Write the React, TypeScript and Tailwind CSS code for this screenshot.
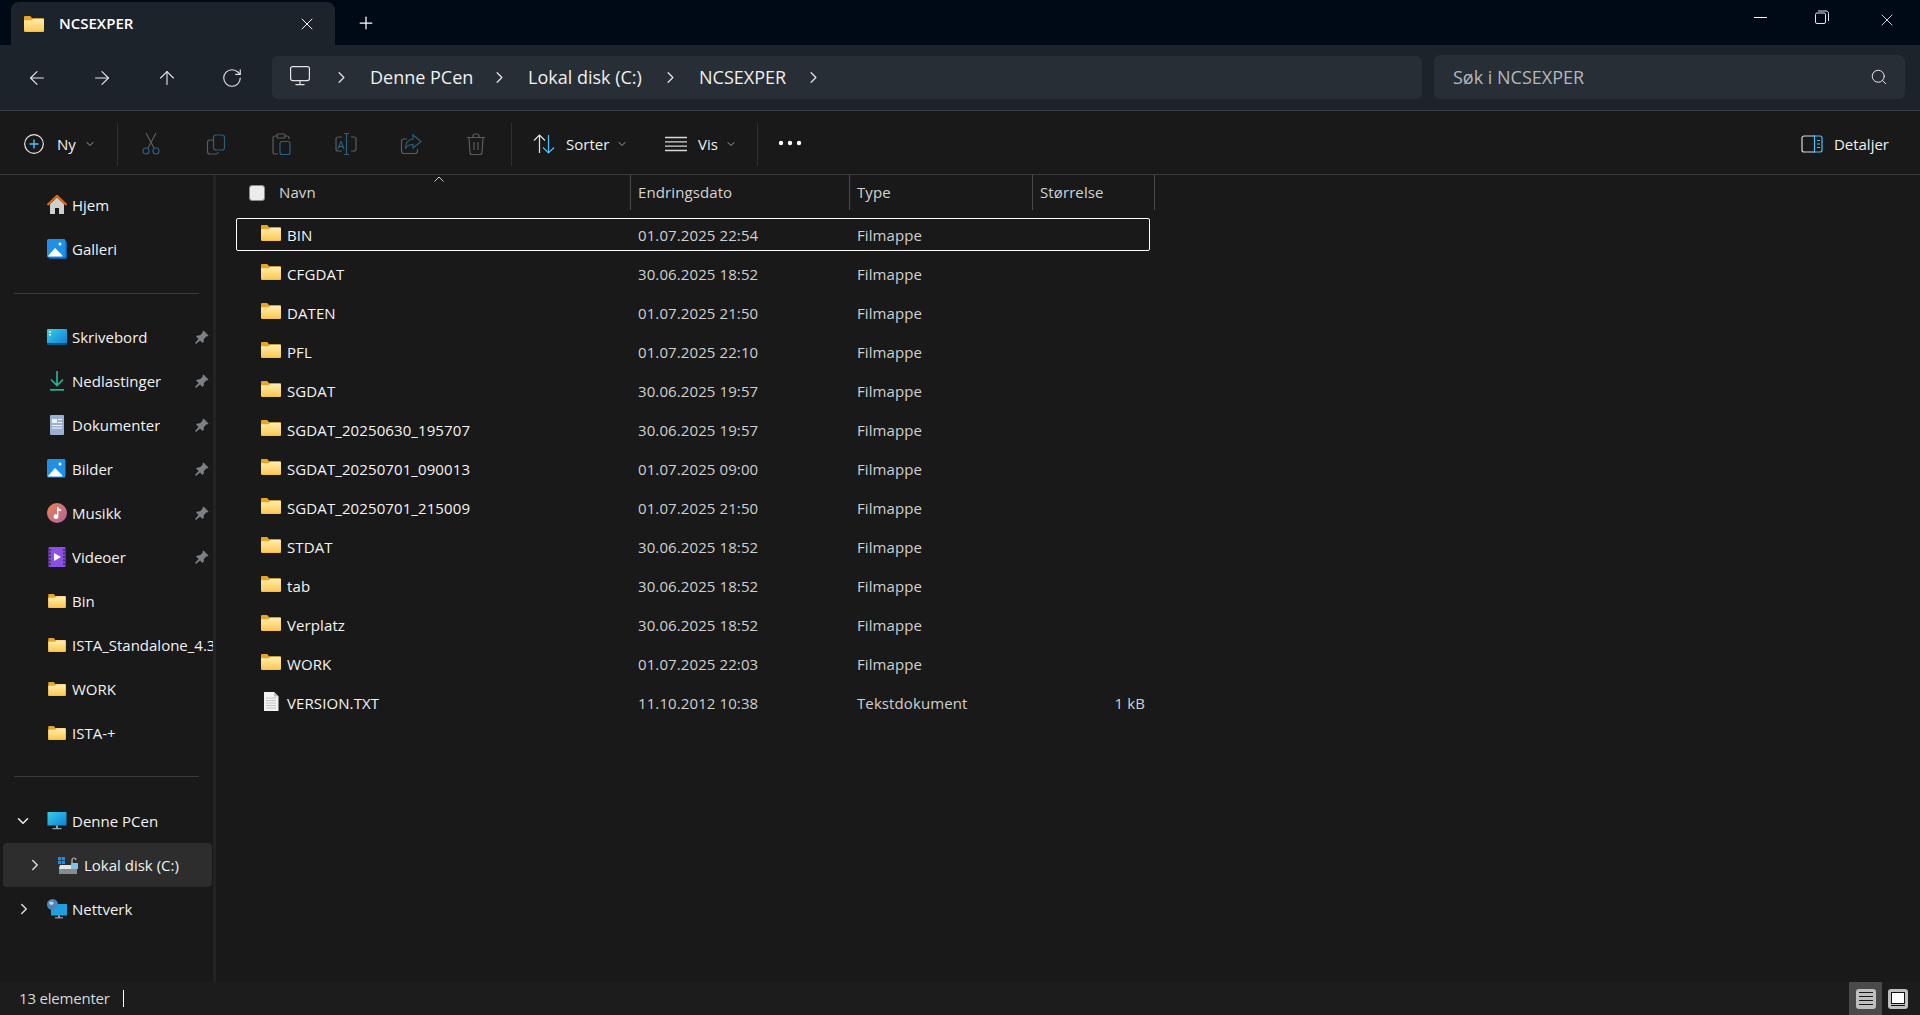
import { useId } from 'react'
import { ArrowLeft, ArrowRight, ArrowUp, ChevronDown, ChevronRight, Plus, RotateCw, Search, X } from 'lucide-react'

const files = [
  { name: 'BIN', date: '01.07.2025 22:54', type: 'Filmappe' },
  { name: 'CFGDAT', date: '30.06.2025 18:52', type: 'Filmappe' },
  { name: 'DATEN', date: '01.07.2025 21:50', type: 'Filmappe' },
  { name: 'PFL', date: '01.07.2025 22:10', type: 'Filmappe' },
  { name: 'SGDAT', date: '30.06.2025 19:57', type: 'Filmappe' },
  { name: 'SGDAT_20250630_195707', date: '30.06.2025 19:57', type: 'Filmappe' },
  { name: 'SGDAT_20250701_090013', date: '01.07.2025 09:00', type: 'Filmappe' },
  { name: 'SGDAT_20250701_215009', date: '01.07.2025 21:50', type: 'Filmappe' },
  { name: 'STDAT', date: '30.06.2025 18:52', type: 'Filmappe' },
  { name: 'tab', date: '30.06.2025 18:52', type: 'Filmappe' },
  { name: 'Verplatz', date: '30.06.2025 18:52', type: 'Filmappe' },
  { name: 'WORK', date: '01.07.2025 22:03', type: 'Filmappe' },
  { name: 'VERSION.TXT', date: '11.10.2012 10:38', type: 'Tekstdokument', size: '1 kB' },
]

function Folder({ className = 'w-5 h-4' }: { className?: string }) {
  const id = useId()
  return (
    <svg viewBox="0 0 20 16" className={className}>
      <defs>
        <linearGradient id={id} x1="0" y1="0" x2="0" y2="1">
          <stop offset="0" stopColor="#ffeeb0" />
          <stop offset="1" stopColor="#fcc74f" />
        </linearGradient>
      </defs>
      <path d="M0 1.2C0 .5.5 0 1.2 0h5l2 2.2H19c.6 0 1 .4 1 1v11.6c0 .7-.5 1.2-1.2 1.2H1.2C.5 16 0 15.500 0 14.800z" fill="#e8a521" />
      <path d="M0 4.200h7.500l2-1.500h9.300c.7 0 1.200.5 1.200 1.200v10.600c0 .8-.5 1.300-1.200 1.300H1.200C.5 15.800 0 15.300 0 14.600z" fill={`url(#${id})`} />
    </svg>
  )
}

function TextFile() {
  return (
    <svg viewBox="0 0 16 19" className="w-4 h-[19px]">
      <path d="M1 0h10l4.500 4.500V19H1z" fill="#f2f2f2" />
      <path d="M11 0l4.500 4.500H11z" fill="#bdbdbd" />
      <path d="M3 6h10M3 8.500h10M3 11h10M3 13.500h10M3 16h10" stroke="#c4c4c4" strokeWidth="1" />
    </svg>
  )
}

function Pin() {
  return (
    <svg viewBox="0 0 14 14" className="w-[14px] h-[14px]">
      <path d="M8.500.5l5 5-1 1-1-.2-2.600 2.600-.2 2.800-1.200 1.200-2.500-2.500L1 14 0 13l3.600-3.900L1.100 6.600l1.200-1.200 2.800-.2 2.600-2.600-.2-1z" fill="#7b8086" />
    </svg>
  )
}

function HomeIcon() {
  return (
    <svg viewBox="0 0 20 20" className="w-5 h-5">
      <path d="M3 9l7-6.500L17 9v10H12v-6H8v6H3z" fill="#cfcfcf" />
      <path d="M.5 10L10 .8 19.500 10" fill="none" stroke="#ee6a0c" strokeWidth="2" />
    </svg>
  )
}

function PictureIcon({ back = false }: { back?: boolean }) {
  return (
    <svg viewBox="0 0 20 20" className="w-5 h-5">
      {back && <rect x="2" y="2" width="18" height="18" rx="1.500" fill="#0f5fb0" />}
      <rect x="0" y="0" width="18.500" height="18.500" rx="1.500" fill="#1e90e6" />
      <circle cx="13" cy="5" r="1.500" fill="#fff" />
      <path d="M1 17l7-8 7 7 .5 1.500H1z" fill="#fff" />
    </svg>
  )
}

function DesktopIcon() {
  return (
    <svg viewBox="0 0 20 17" className="w-5 h-[17px]">
      <defs>
        <linearGradient id="desk" x1="0" y1="0" x2="1" y2="1">
          <stop offset="0" stopColor="#35cfe6" />
          <stop offset="1" stopColor="#0f7fd6" />
        </linearGradient>
      </defs>
      <rect width="20" height="15.500" rx="1" fill="url(#desk)" />
      <rect y="14" width="20" height="1.500" fill="#0b4f8f" />
      <rect x="2" y="2" width="2" height="1.500" fill="#fff" />
      <rect x="2" y="5" width="2" height="1.500" fill="#fff" />
    </svg>
  )
}

function DownloadIcon() {
  return (
    <svg viewBox="0 0 20 20" className="w-5 h-5">
      <path d="M10 0v14M4 8.500l6 6 6-6" fill="none" stroke="#22b594" strokeWidth="1.700" />
      <rect x="3" y="18" width="14" height="1.700" fill="#22b594" />
    </svg>
  )
}

function DocIcon() {
  return (
    <svg viewBox="0 0 20 20" className="w-5 h-5">
      <rect x="3" y="0" width="14" height="20" rx="1" fill="#9ab2d0" />
      <rect x="5" y="4" width="5" height="4" fill="#eef3fa" />
      <path d="M11 4.500h4M11 7.500h4M5 10.500h10M5 13h10" stroke="#eef3fa" strokeWidth="1.200" />
    </svg>
  )
}

function MusicIcon() {
  return (
    <svg viewBox="0 0 20 20" className="w-5 h-5">
      <defs>
        <linearGradient id="mus" x1="0" y1="0" x2="1" y2="1">
          <stop offset="0" stopColor="#ec8250" />
          <stop offset="1" stopColor="#b0629e" />
        </linearGradient>
      </defs>
      <circle cx="10" cy="10" r="10" fill="url(#mus)" />
      <path d="M10 4h1.400c.2 1.500 1.500 2.200 2.800 2.400v1.800c-1 0-2-.4-2.800-1v6.300a2.400 2.400 0 1 1-1.400-2.100z" fill="#fff" />
    </svg>
  )
}

function VideoIcon() {
  return (
    <svg viewBox="0 0 20 20" className="w-5 h-5">
      <rect x="1.500" y="0" width="17" height="20" rx="1" fill="#8b4fe4" />
      <path d="M3 2v16M17 2v16" stroke="#3f2173" strokeWidth="1.500" strokeDasharray="2 1.500" />
      <path d="M7 6l7 4-7 4z" fill="#fff" />
    </svg>
  )
}

function PcIcon() {
  return (
    <svg viewBox="0 0 20 20" className="w-5 h-5">
      <defs>
        <linearGradient id="pc" x1="0" y1="0" x2="1" y2="1">
          <stop offset="0" stopColor="#35cfe6" />
          <stop offset="1" stopColor="#0f7fd6" />
        </linearGradient>
      </defs>
      <rect x="0.500" y="1" width="19" height="13.500" fill="url(#pc)" />
      <rect x="9" y="14.500" width="2" height="3" fill="#9aa4ad" />
      <rect x="5.500" y="17" width="9" height="1.200" fill="#9aa4ad" />
    </svg>
  )
}

function DriveIcon() {
  return (
    <svg viewBox="0 0 20 17" className="w-5 h-[17px]">
      <rect x="0" y="0" width="3.200" height="3.200" fill="#1d8fe6" />
      <rect x="3.800" y="0" width="3.200" height="3.200" fill="#1d8fe6" />
      <rect x="0" y="3.800" width="3.200" height="3.200" fill="#1d8fe6" />
      <rect x="3.800" y="3.800" width="3.200" height="3.200" fill="#1d8fe6" />
      <path d="M2 8h16l1 3v5.500H1V11z" fill="#e4e4e4" />
      <rect x="1" y="12" width="18" height="4.500" fill="#8a8a8a" />
      <rect x="3" y="13.300" width="1.800" height="1.800" fill="#37d05a" />
      <path d="M14 6V3a2 2 0 0 1 4 0" fill="none" stroke="#bcbcbc" strokeWidth="1.200" />
      <rect x="13" y="6" width="7" height="6" rx="0.500" fill="#7fc1ee" />
    </svg>
  )
}

function NetworkIcon() {
  return (
    <svg viewBox="0 0 20 20" className="w-5 h-5">
      <rect x="4" y="5" width="16" height="11.500" fill="#1f9fe0" />
      <rect x="11" y="16.500" width="2" height="2.200" fill="#9aa4ad" />
      <rect x="8" y="18.200" width="8" height="1.200" fill="#9aa4ad" />
      <circle cx="5.500" cy="5.500" r="5.500" fill="#4c86bd" />
      <path d="M2 3.500c2-1.500 3.500-1 5 .5-1 2-2.500 2-4 1.500z" fill="#b6dcf5" />
    </svg>
  )
}

function NavRow({ label, icon, pinned }: { label: string; icon: React.ReactNode; pinned?: boolean }) {
  return (
    <div className="flex items-center h-[44px] pl-[47px] text-[15px] text-[#f2f2f2] whitespace-nowrap">
      <div className="w-5 flex justify-center shrink-0">{icon}</div>
      <span className="ml-[5px] min-w-0 overflow-hidden">{label}</span>
      {pinned && <span className="ml-auto mr-[4px] shrink-0"><Pin /></span>}
    </div>
  )
}

function ToolSep({ className = '' }: { className?: string }) {
  return <div className={`w-px h-[43px] bg-[#2f2f2f] shrink-0 ${className}`} />
}

function SmallChevron({ className = '' }: { className?: string }) {
  return <ChevronDown className={`w-3 h-3 text-[#c8c8c8] shrink-0 ${className}`} strokeWidth={1.5} />
}

function DisabledIcon({ children }: { children: React.ReactNode }) {
  return (
    <div className="w-[65px] flex justify-center shrink-0">
      <svg viewBox="0 0 24 24" className="w-6 h-6" fill="none" strokeWidth="1.200">{children}</svg>
    </div>
  )
}

function Crumb({ label, className = '' }: { label: string; className?: string }) {
  return <span className={`text-[18px] text-[#f0f0f0] whitespace-nowrap ${className}`}>{label}</span>
}

function CrumbArrow() {
  return <ChevronRight className="w-[19px] h-[19px] -mx-px text-[#e8e8e8] shrink-0" strokeWidth={1.5} />
}

export default function App() {
  return (
    <div className="w-[1920px] h-[1015px] overflow-hidden flex flex-col bg-[#191919] font-['Open_Sans',sans-serif] text-white">
      {/* title bar */}
      <div className="h-[45px] shrink-0 flex bg-[#000a17]">
        <div className="ml-[11px] mt-[2px] w-[324px] h-[43px] bg-[#1c232a] rounded-t-lg flex items-center pl-[13px]">
          <Folder />
          <span className="ml-[15px] text-[15px] font-semibold text-white">NCSEXPER</span>
          <X className="w-5 h-5 ml-auto mr-[18px] text-[#f0f0f0]" strokeWidth={1.2} />
        </div>
        <div className="ml-[21px] h-full flex items-center">
          <Plus className="w-5 h-5" strokeWidth={1.5} />
        </div>
        <div className="ml-auto flex items-start pt-[10px]">
          <div className="w-[63px] flex justify-center pt-[7px]"><div className="w-[13px] h-px bg-white" /></div>
          <div className="w-[63px] flex justify-center pr-[3px]">
            <svg viewBox="0 0 14 14" className="w-[14px] h-[14px]" fill="none" stroke="#e8e8e8" strokeWidth="1">
              <rect x="0.500" y="3" width="10" height="10.500" rx="1.500" />
              <path d="M3 1h8c1.500 0 2.500 1 2.500 2.500V11" />
            </svg>
          </div>
          <div className="w-[63px] flex justify-center">
            <X className="w-5 h-5 text-[#e8e8e8]" strokeWidth={1.1} />
          </div>
          <div className="w-[2px]" />
        </div>
      </div>

      {/* nav bar */}
      <div className="h-[66px] shrink-0 bg-[#1c232a] border-b border-[#3b3f42] flex pt-[11px] pl-[4px]">
        {[ArrowLeft, ArrowRight, ArrowUp, RotateCw].map((Icon, i) => (
          <div key={i} className="w-[65px] h-[43px] flex items-center justify-center">
            <Icon className="w-[22px] h-[22px] text-[#e8e8e8]" strokeWidth={1.2} />
          </div>
        ))}
        <div className="ml-[8px] w-[1150px] h-[43px] bg-[#272e36] rounded-md flex items-center pl-[18px]">
          <svg viewBox="0 0 20 20" className="w-5 h-5 -mt-1" fill="none" stroke="#e4e4e4" strokeWidth="1.200">
            <rect x="0.600" y="0.600" width="18.800" height="14" rx="2" />
            <path d="M10 14.600v3.500M5.500 18.600h9" />
          </svg>
          <div className="w-[23px]" />
          <CrumbArrow />
          <Crumb label="Denne PCen" className="ml-[20px] w-[121px]" />
          <CrumbArrow />
          <Crumb label="Lokal disk (C:)" className="ml-[20px] w-[134px]" />
          <CrumbArrow />
          <Crumb label="NCSEXPER" className="ml-[20px] w-[106px]" />
          <CrumbArrow />
        </div>
        <div className="ml-[12px] w-[471px] h-[44px] -mt-px bg-[#272e36] rounded-md flex items-center pl-[19px] pr-[17px]">
          <span className="text-[18px] text-[#b4b8bc]">Søk i NCSEXPER</span>
          <Search className="w-[18px] h-[18px] ml-auto text-[#e8e8e8]" strokeWidth={1.3} />
        </div>
      </div>

      {/* command bar */}
      <div className="h-[64px] shrink-0 border-b border-[#3a3a3a] flex items-center pt-[3px] text-[15px] text-[#f0f0f0]">
        <svg viewBox="0 0 20 20" className="w-5 h-5 ml-[24px]" fill="none" strokeWidth="1.200">
          <circle cx="10" cy="10" r="9.300" stroke="#e6e6e6" />
          <path d="M10 5.500v9M5.500 10h9" stroke="#4cc2ff" strokeWidth="1.400" />
        </svg>
        <span className="ml-[13px] w-[27px]">Ny</span>
        <SmallChevron />
        <ToolSep className="ml-[21px]" />
        <div className="flex">
          <DisabledIcon>
            <path d="M7 1l8 15M17 1L9 16" stroke="#5c5c5c" />
            <circle cx="7" cy="19" r="3" stroke="#2a5f82" />
            <circle cx="17" cy="19" r="3" stroke="#2a5f82" />
          </DisabledIcon>
          <DisabledIcon>
            <path d="M9 8H6a2.500 2.500 0 0 0-2.500 2.500v9A2.500 2.500 0 0 0 6 22h6a2.500 2.500 0 0 0 2.500-2" stroke="#5c5c5c" />
            <rect x="9.500" y="3" width="11" height="15" rx="2.500" stroke="#2a5f82" />
          </DisabledIcon>
          <DisabledIcon>
            <path d="M8 4H6a2 2 0 0 0-2 2v14a2 2 0 0 0 2 2h3M16 4h2a2 2 0 0 1 2 2v1" stroke="#5c5c5c" />
            <rect x="8" y="2" width="8" height="4" rx="1" stroke="#5c5c5c" />
            <rect x="11" y="9.500" width="10" height="13" rx="2" stroke="#2a5f82" />
          </DisabledIcon>
          <DisabledIcon>
            <path d="M8 5H4a2 2 0 0 0-2 2v10a2 2 0 0 0 2 2h4M17 5h3a2 2 0 0 1 2 2v10a2 2 0 0 1-2 2h-3" stroke="#5c5c5c" />
            <path d="M12.500 1.500v21M10 1.500h5M10 22.500h5" stroke="#2a5f82" />
            <text x="3.500" y="16.500" fontSize="11" fill="#2f6a90" stroke="none" fontFamily="Open Sans">A</text>
          </DisabledIcon>
          <DisabledIcon>
            <path d="M8 7H5a2.500 2.500 0 0 0-2.500 2.500v9.500A2.500 2.500 0 0 0 5 21.500h11a2.500 2.500 0 0 0 2.500-2.500v-2" stroke="#5c5c5c" />
            <path d="M14 3l8 6.500-8 6.500v-3.500c-4 0-6 1-7.500 4 0-5 2.500-9 7.500-9.500z" stroke="#2a5f82" />
          </DisabledIcon>
          <DisabledIcon>
            <path d="M3 5.500h18M9 5.500V4a2 2 0 0 1 2-2h2a2 2 0 0 1 2 2v1.500M5 5.500l1 15a2 2 0 0 0 2 2h8a2 2 0 0 0 2-2l1-15M10 10v8M14 10v8" stroke="#5c5c5c" />
          </DisabledIcon>
        </div>
        <ToolSep className="ml-[3px]" />
        <svg viewBox="0 0 22 22" className="w-[22px] h-[22px] ml-[21px]" fill="none" strokeWidth="1.200">
          <path d="M6.500 20V2M1 7.500L6.500 2 12 7.500" stroke="#e6e6e6" />
          <path d="M15.500 2v18M10 14.500l5.500 5.500 5.500-5.500" stroke="#4cc2ff" />
        </svg>
        <span className="ml-[11px] w-[50px]">Sorter</span>
        <SmallChevron />
        <svg viewBox="0 0 22 16" className="w-[22px] h-4 ml-[37px]">
          <path d="M0 1.500h22M0 5.800h22M0 10.200h22M0 14.500h22" stroke="#d8d8d8" strokeWidth="1.300" />
        </svg>
        <span className="ml-[11px] w-[27px]">Vis</span>
        <SmallChevron />
        <ToolSep className="ml-[20px]" />
        <svg viewBox="0 0 24 6" className="w-6 h-[6px] ml-[20px] -mt-[3px]">
          <circle cx="3" cy="3" r="2.200" fill="#fff" />
          <circle cx="12" cy="3" r="2.200" fill="#fff" />
          <circle cx="21" cy="3" r="2.200" fill="#fff" />
        </svg>
        <svg viewBox="0 0 22 20" className="w-[22px] h-5 ml-auto" fill="none">
          <path d="M14 2H3a2 2 0 0 0-2 2v12a2 2 0 0 0 2 2h11" stroke="#d8d8d8" strokeWidth="1.200" />
          <path d="M13.500 2H19a2 2 0 0 1 2 2v12a2 2 0 0 1-2 2h-5.500z" stroke="#4cc2ff" strokeWidth="1.200" />
          <path d="M16 6.500h3M16 10h3M16 13.500h3" stroke="#4cc2ff" strokeWidth="1" />
        </svg>
        <span className="ml-[11px] mr-[31px]">Detaljer</span>
      </div>

      {/* main area */}
      <div className="flex-1 min-h-0 flex">
        <aside className="w-[213px] shrink-0 pt-[8px] overflow-hidden">
          <NavRow label="Hjem" icon={<HomeIcon />} />
          <NavRow label="Galleri" icon={<PictureIcon back />} />
          <div className="mx-[14px] mt-[22px] mb-[21px] h-px bg-[#3a3a3a]" />
          <NavRow label="Skrivebord" icon={<DesktopIcon />} pinned />
          <NavRow label="Nedlastinger" icon={<DownloadIcon />} pinned />
          <NavRow label="Dokumenter" icon={<DocIcon />} pinned />
          <NavRow label="Bilder" icon={<PictureIcon />} pinned />
          <NavRow label="Musikk" icon={<MusicIcon />} pinned />
          <NavRow label="Videoer" icon={<VideoIcon />} pinned />
          <NavRow label="Bin" icon={<Folder className="w-[18px] h-[14px]" />} />
          <NavRow label="ISTA_Standalone_4.3" icon={<Folder className="w-[18px] h-[14px]" />} />
          <NavRow label="WORK" icon={<Folder className="w-[18px] h-[14px]" />} />
          <NavRow label="ISTA-+" icon={<Folder className="w-[18px] h-[14px]" />} />
          <div className="mx-[14px] mt-[21px] mb-[22px] h-px bg-[#3a3a3a]" />
          <div className="flex items-center h-[44px] pl-[14px] text-[15px] text-[#f2f2f2]">
            <ChevronDown className="w-[18px] h-[18px] text-[#f0f0f0] shrink-0" strokeWidth={2} />
            <div className="ml-[15px] w-5 shrink-0"><PcIcon /></div>
            <span className="ml-[5px]">Denne PCen</span>
          </div>
          <div className="ml-[3px] mr-px flex items-center h-[44px] pl-[23px] rounded bg-[#2d2d2d] text-[15px] text-[#f2f2f2]">
            <ChevronRight className="w-[18px] h-[18px] text-[#d8d8d8] shrink-0" strokeWidth={2} />
            <div className="ml-[14px] w-5 shrink-0"><DriveIcon /></div>
            <span className="ml-[6px]">Lokal disk (C:)</span>
          </div>
          <div className="flex items-center h-[44px] pl-[15px] text-[15px] text-[#f2f2f2]">
            <ChevronRight className="w-[18px] h-[18px] text-[#d8d8d8] shrink-0" strokeWidth={2} />
            <div className="ml-[14px] w-5 shrink-0"><NetworkIcon /></div>
            <span className="ml-[5px]">Nettverk</span>
          </div>
        </aside>
        <div className="w-[3px] shrink-0 bg-[#232323]" />

        {/* file list */}
        <main className="flex-1 min-w-0 text-[15px] tracking-[0.1px]">
          <div className="relative flex h-[35px] items-center text-[#d4d4d4]">
            <svg viewBox="0 0 10 6" className="absolute left-[218px] top-[1px] w-[10px] h-[6px]" fill="none" stroke="#c8c8c8" strokeWidth="1">
              <path d="M.5 5.500L5 1l4.500 4.500" />
            </svg>
            <div className="w-[415px] h-full flex items-center pl-[33px] border-r border-[#4a4a4a]">
              <div className="w-4 h-4 rounded-[3px] bg-[#ececec] border border-[#8a8a8a]" />
              <span className="ml-[14px]">Navn</span>
            </div>
            <div className="w-[219px] h-full flex items-center pl-[7px] border-r border-[#4a4a4a]">Endringsdato</div>
            <div className="w-[183px] h-full flex items-center pl-[7px] border-r border-[#4a4a4a]">Type</div>
            <div className="w-[122px] h-full flex items-center pl-[7px] border-r border-[#4a4a4a]">Størrelse</div>
          </div>
          <div className="mt-[8px] ml-[20px] w-[914px] flex flex-col gap-[6px]">
            {files.map((file, i) => (
              <div
                key={file.name}
                className={`h-[33px] flex items-center border rounded-[2px] pt-[2px] ${i === 0 ? 'border-white' : 'border-transparent'}`}
              >
                <div className="w-[401px] flex items-center pl-[24px] text-[#f4f4f4]">
                  <div className="w-5 flex justify-center -mt-[5px]">{file.size ? <TextFile /> : <Folder />}</div>
                  <span className="ml-[6px]">{file.name}</span>
                </div>
                <div className="w-[219px] text-[#d0d0d0]">{file.date}</div>
                <div className="w-[183px] text-[#d0d0d0]">{file.type}</div>
                <div className="w-[105px] text-right text-[#d0d0d0]">{file.size}</div>
              </div>
            ))}
          </div>
        </main>
      </div>

      {/* status bar */}
      <div className="h-[33px] shrink-0 bg-[#1c1c1c] flex items-center text-[15px] text-[#d8d8d8]">
        <span className="ml-[19px] w-[104px] tracking-[-0.2px]">13 elementer</span>
        <div className="w-px h-[17px] bg-white" />
        <div className="ml-auto h-full w-[33px] bg-[#4a4a4a] flex items-center justify-center">
          <div className="w-5 h-5 rounded-[3px] bg-[#bfbfbf] flex flex-col justify-center gap-[3px] px-[3px]">
            <div className="h-px bg-[#1a1a1a]" />
            <div className="h-px bg-[#1a1a1a]" />
            <div className="h-px bg-[#1a1a1a]" />
            <div className="h-px bg-[#1a1a1a]" />
          </div>
        </div>
        <div className="ml-[6px] mr-[12px] w-5 h-5 rounded-[3px] bg-[#bfbfbf] flex flex-col p-[3px] gap-[1px]">
          <div className="flex-1 bg-white border border-[#111]" />
          <div className="h-px bg-[#111]" />
        </div>
      </div>
    </div>
  )
}
